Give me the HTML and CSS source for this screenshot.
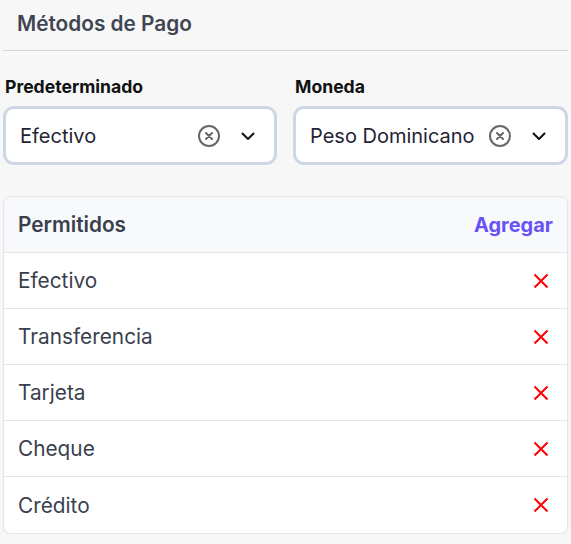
FILE: index.html
```html
<!DOCTYPE html>
<html lang="es">
<head>
<meta charset="utf-8">
<link rel="stylesheet" href="styles.css">
</head>
<body>
<div class="page">
  <header class="title-bar">
    <h1 class="title">Métodos de Pago</h1>
  </header>
  <div class="fields">
    <div class="field">
      <label class="label">Predeterminado</label>
      <div class="select">
        <span class="select-value">Efectivo</span>
        <svg class="clear" width="24" height="24" viewBox="0 0 24 24"><circle cx="12" cy="12" r="10" fill="none" stroke="#666" stroke-width="2"/><path d="M9 9l6 6M15 9l-6 6" stroke="#666" stroke-width="2" stroke-linecap="round"/></svg>
        <svg class="chevron" width="16" height="16" viewBox="0 0 16 16"><path d="M2.5 5.5L8 11l5.5-5.5" fill="none" stroke="#111" stroke-width="2" stroke-linecap="round" stroke-linejoin="round"/></svg>
      </div>
    </div>
    <div class="field">
      <label class="label">Moneda</label>
      <div class="select">
        <span class="select-value">Peso Dominicano</span>
        <svg class="clear" width="24" height="24" viewBox="0 0 24 24"><circle cx="12" cy="12" r="10" fill="none" stroke="#666" stroke-width="2"/><path d="M9 9l6 6M15 9l-6 6" stroke="#666" stroke-width="2" stroke-linecap="round"/></svg>
        <svg class="chevron" width="16" height="16" viewBox="0 0 16 16"><path d="M2.5 5.5L8 11l5.5-5.5" fill="none" stroke="#111" stroke-width="2" stroke-linecap="round" stroke-linejoin="round"/></svg>
      </div>
    </div>
  </div>
  <section class="card">
    <div class="card-head">
      <span class="card-title">Permitidos</span>
      <span class="add">Agregar</span>
    </div>
    <ul class="list">
      <li class="row"><span>Efectivo</span><svg class="x" width="16" height="16" viewBox="0 0 16 16"><path d="M1.5 1.5l13 13M14.5 1.5l-13 13" stroke="#ff0000" stroke-width="2"/></svg></li>
      <li class="row"><span>Transferencia</span><svg class="x" width="16" height="16" viewBox="0 0 16 16"><path d="M1.5 1.5l13 13M14.5 1.5l-13 13" stroke="#ff0000" stroke-width="2"/></svg></li>
      <li class="row"><span>Tarjeta</span><svg class="x" width="16" height="16" viewBox="0 0 16 16"><path d="M1.5 1.5l13 13M14.5 1.5l-13 13" stroke="#ff0000" stroke-width="2"/></svg></li>
      <li class="row"><span>Cheque</span><svg class="x" width="16" height="16" viewBox="0 0 16 16"><path d="M1.5 1.5l13 13M14.5 1.5l-13 13" stroke="#ff0000" stroke-width="2"/></svg></li>
      <li class="row"><span>Crédito</span><svg class="x" width="16" height="16" viewBox="0 0 16 16"><path d="M1.5 1.5l13 13M14.5 1.5l-13 13" stroke="#ff0000" stroke-width="2"/></svg></li>
    </ul>
  </section>
</div>
</body>
</html>
```

FILE: styles.css
```css
html, body {
  margin: 0;
  padding: 0;
  background: #f7f7f7;
  font-family: Inter, "Noto Sans", sans-serif;
}
.page {
  padding: 0 3px 0 3px;
  width: 565px;
}
.title-bar {
  height: 51px;
  border-bottom: 1px solid #d4d4d4;
  display: flex;
  align-items: center;
  padding-left: 14px;
  box-sizing: border-box;
}
.title {
  margin: 0;
  font-size: 20.8px;
  font-weight: 600;
  color: #404552;
  position: relative;
  top: -2px;
}
.fields {
  display: grid;
  grid-template-columns: 274px 275px;
  column-gap: 16px;
  padding-top: 23px;
}
.field {
  display: flex;
  flex-direction: column;
}
.label {
  font-size: 17.6px;
  font-weight: 700;
  color: #111111;
  line-height: 26px;
  padding-left: 2px;
  margin-bottom: 6px;
}
.select {
  height: 59px;
  box-sizing: border-box;
  border: 3px solid #cdd6e4;
  border-radius: 11px;
  background: #fff;
  display: flex;
  align-items: center;
  padding: 0 18px 0 14px;
}
.select-value {
  flex: 1;
  font-size: 20px;
  color: #1f2433;
}
.clear {
  margin-right: 19px;
}
.card {
  margin-top: 31px;
  border: 1px solid #e3e5ea;
  border-radius: 8px;
  background: #fff;
  overflow: hidden;
  box-shadow: 0 1px 2px rgba(0,0,0,0.05);
}
.card-head {
  height: 56px;
  background: #f8f9fb;
  border-bottom: 1px solid #e3e5ea;
  box-sizing: border-box;
  display: flex;
  align-items: center;
  justify-content: space-between;
  padding: 0 14px 0 14px;
}
.card-title {
  font-size: 20.8px;
  font-weight: 600;
  color: #3a3f4e;
}
.add {
  font-size: 20px;
  font-weight: 700;
  color: #6652f5;
}
.list {
  list-style: none;
  margin: 0;
  padding: 0;
}
.row {
  height: 56px;
  box-sizing: border-box;
  display: flex;
  align-items: center;
  justify-content: space-between;
  padding: 0 18px 0 14px;
  font-size: 20.8px;
  color: #3a3f4e;
  border-bottom: 1px solid #e3e5ea;
}
.row:last-child {
  border-bottom: none;
}
.x {
  width: 16px;
  height: 16px;
}
```
